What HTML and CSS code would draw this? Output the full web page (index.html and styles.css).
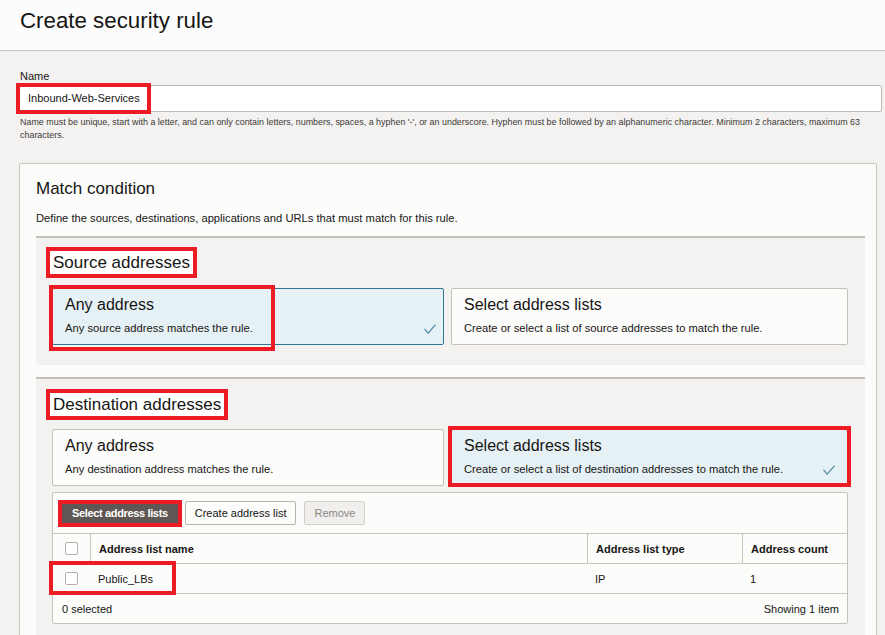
FILE: index.html
```html
<!DOCTYPE html>
<html lang="en">
<head>
<meta charset="utf-8">
<title>Create security rule</title>
<link rel="stylesheet" href="styles.css">
</head>
<body>
<header class="page-header">
  <h1 class="page-title">Create security rule</h1>
</header>
<main class="content">
  <div class="field">
    <label class="field-label">Name</label>
    <div class="text-input">
      <span class="input-value">Inbound-Web-Services</span>
      <span class="mark mark-name"></span>
    </div>
    <p class="help">Name must be unique, start with a letter, and can only contain letters, numbers, spaces, a hyphen '-', or an underscore. Hyphen must be followed by an alphanumeric character. Minimum 2 characters, maximum 63 characters.</p>
  </div>

  <section class="panel">
    <h2 class="panel-title">Match condition</h2>
    <p class="panel-desc">Define the sources, destinations, applications and URLs that must match for this rule.</p>

    <div class="group">
      <h3 class="group-title"><span class="hl">Source addresses</span></h3>
      <div class="choices">
        <div class="choice is-selected">
          <div class="choice-title">Any address</div>
          <div class="choice-desc">
            <span>Any source address matches the rule.</span>
            <svg class="check check-tight" width="12" height="10" viewBox="0 0 12 10"><polyline points="0.5,4.8 4.2,9.2 11.5,0.6" fill="none" stroke="#4f8ba4" stroke-width="1.2"/></svg>
          </div>
          <span class="mark mark-src"></span>
        </div>
        <div class="choice">
          <div class="choice-title">Select address lists</div>
          <div class="choice-desc"><span>Create or select a list of source addresses to match the rule.</span></div>
        </div>
      </div>
    </div>

    <div class="group group-dest">
      <h3 class="group-title"><span class="hl">Destination addresses</span></h3>
      <div class="choices">
        <div class="choice">
          <div class="choice-title">Any address</div>
          <div class="choice-desc"><span>Any destination address matches the rule.</span></div>
        </div>
        <div class="choice is-selected">
          <div class="choice-title">Select address lists</div>
          <div class="choice-desc">
            <span>Create or select a list of destination addresses to match the rule.</span>
            <svg class="check" width="12" height="10" viewBox="0 0 12 10"><polyline points="0.5,4.8 4.2,9.2 11.5,0.6" fill="none" stroke="#4f8ba4" stroke-width="1.2"/></svg>
          </div>
          <span class="mark mark-dest"></span>
        </div>
      </div>

      <div class="table-panel">
        <div class="toolbar">
          <button class="btn btn-primary">Select address lists<span class="mark mark-btn"></span></button>
          <button class="btn">Create address list</button>
          <button class="btn btn-disabled">Remove</button>
        </div>
        <table class="grid">
          <colgroup><col class="c-check"><col class="c-name"><col class="c-type"><col></colgroup>
          <thead>
            <tr>
              <th class="cell-check"><span class="checkbox"></span></th>
              <th>Address list name</th>
              <th>Address list type</th>
              <th>Address count</th>
            </tr>
          </thead>
          <tbody>
            <tr>
              <td class="cell-check"><span class="checkbox"></span><span class="mark mark-row"></span></td>
              <td>Public_LBs</td>
              <td>IP</td>
              <td>1</td>
            </tr>
          </tbody>
        </table>
        <div class="table-footer">
          <span>0 selected</span>
          <span>Showing 1 item</span>
        </div>
      </div>
    </div>
  </section>
</main>
</body>
</html>
```
FILE: styles.css
```css
html, body {
  margin: 0;
  padding: 0;
  overflow: hidden;
}
body {
  background: #f3f2f1;
  color: #161513;
  font-family: "Liberation Sans", Arial, sans-serif;
  font-size: 11px;
}
.page-header {
  box-sizing: border-box;
  background: #fcfcfc;
  border-bottom: 1px solid #c6c2bd;
  height: 51px;
  padding: 8px 20px 0;
}
.page-title {
  margin: 0;
  font-size: 22.3px;
  line-height: 26px;
  font-weight: normal;
  color: #161513;
}
.content {
  padding: 18px 3px 40px 18px;
}
.field-label {
  display: block;
  padding-left: 2px;
  padding-top: 1px;
  font-size: 11px;
  line-height: 13px;
}
.text-input {
  position: relative;
  margin-top: 2px;
  height: 27px;
  box-sizing: border-box;
  background: #fff;
  border: 1px solid #bfbab5;
  border-radius: 2px;
  padding-left: 9px;
  font-size: 11px;
  line-height: 25px;
}
.mark {
  position: absolute;
  box-sizing: border-box;
  border: 4px solid #ed1c24;
  pointer-events: none;
}
.mark-name { left: -3px; top: -3px; width: 135px; height: 31px; }
.help {
  margin: 4px 0 0 2px;
  font-size: 8.93px;
  line-height: 13px;
  color: #3d3935;
}
.panel {
  margin: 21px 5px 0 1px;
  background: #fcfcfb;
  border: 1px solid #c9c5c0;
  border-radius: 2px;
  padding: 15px 11px 0 16px;
}
.panel-title {
  margin: 0;
  font-size: 17px;
  line-height: 20px;
  font-weight: normal;
}
.panel-desc {
  margin: 12px 0 0;
  font-size: 11.2px;
  line-height: 14px;
}
.group {
  margin-top: 11px;
  background: #f3f2f1;
  border-top: 2px solid #c2beb9;
  padding: 9px 17px 20px 16px;
}
.group-dest {
  margin-top: 12px;
  padding-top: 10px;
  padding-bottom: 40px;
}
.group-dest .choices { margin-top: 9px; }
.group-title {
  margin: 0;
  font-size: 17px;
  line-height: 23px;
  font-weight: normal;
}
.hl {
  display: inline-block;
  margin-left: -6px;
  background: #fff;
  border: 4px solid #ed1c24;
  padding: 0 3px;
}
.choices {
  display: grid;
  grid-template-columns: 392px 1fr;
  gap: 7px;
  margin-top: 10px;
}
.choice {
  position: relative;
  height: 57px;
  box-sizing: border-box;
  background: #fcfcfb;
  border: 1px solid #c4c0bb;
  border-radius: 2px;
  padding: 6px 12px 0;
}
.choice.is-selected {
  background: #e6f1f5;
  border-color: #2d7593;
}
.choice-title {
  font-size: 16px;
  line-height: 19px;
}
.choice-desc {
  display: flex;
  align-items: center;
  margin-top: 8px;
  font-size: 11.2px;
  line-height: 13px;
}
.check {
  margin-left: auto;
  flex: none;
}
.check-tight { margin-right: -5px; }
.mark-src { left: -4px; top: -4px; width: 226px; height: 66px; }
.mark-dest { left: -4px; top: -4px; right: -4px; height: 61px; }
.table-panel {
  margin-top: 6px;
  background: #fcfcfb;
  border: 1px solid #c4c0bb;
  border-radius: 2px;
}
.toolbar {
  display: flex;
  gap: 7px;
  padding: 8px 9px;
}
.btn {
  position: relative;
  height: 24px;
  box-sizing: border-box;
  padding: 0 9px;
  font-family: inherit;
  font-size: 11px;
  color: #161513;
  background: #fcfcfb;
  border: 1px solid #b8b3ae;
  border-radius: 2px;
}
.btn-primary {
  background: #5e5753;
  border-color: #5e5753;
  color: #fff;
  font-weight: bold;
  letter-spacing: -0.35px;
}
.btn-disabled {
  margin-left: 1px;
  background: #f1efed;
  border-color: #d3cfcb;
  color: #8c8782;
}
.mark-btn { left: -5px; right: -5px; top: -2px; bottom: -3px; }
.grid {
  width: 100%;
  table-layout: fixed;
  border-collapse: separate;
  border-spacing: 0;
}
.c-check { width: 37px; }
.c-name { width: 497px; }
.c-type { width: 155px; }
.grid th, .grid td {
  text-align: left;
  padding: 0 8px;
  font-size: 11px;
  line-height: 13px;
  border-bottom: 1px solid #c9c5c0;
}
.grid th {
  height: 31px;
  box-sizing: border-box;
  padding-top: 2px;
  border-top: 1px solid #c9c5c0;
  font-weight: bold;
}
.grid th + th { border-left: 1px solid #c9c5c0; }
.grid td { height: 30px; box-sizing: border-box; padding-top: 1px; }
.grid .cell-check {
  position: relative;
  padding: 0;
  text-align: center;
}
.checkbox {
  display: inline-block;
  vertical-align: middle;
  width: 13px;
  height: 13px;
  box-sizing: border-box;
  background: #fff;
  border: 1px solid #b3aea9;
  border-radius: 2px;
}
.mark-row { left: -4px; top: -3px; width: 127px; height: 34px; }
.table-footer {
  display: flex;
  justify-content: space-between;
  align-items: center;
  height: 28px;
  padding: 1px 8px 0 9px;
  font-size: 11px;
}
```
